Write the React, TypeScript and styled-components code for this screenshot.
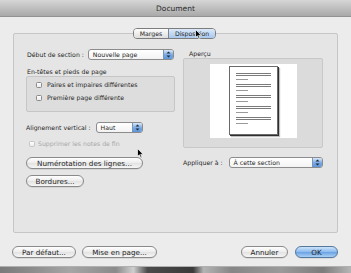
import React from 'react';
import styled, { createGlobalStyle } from 'styled-components';

const GlobalStyle = createGlobalStyle`
  html, body {
    margin: 0;
    padding: 0;
  }
  body {
    width: 351px;
    height: 273px;
    overflow: hidden;
    background: #cfcfcf;
    font-family: "DejaVu Sans", "Liberation Sans", sans-serif;
    color: #262626;
  }
`;

const Window = styled.div`
  position: relative;
  width: 351px;
  height: 266px;
  background: #ececec;
  display: flex;
  flex-direction: column;
`;

const TitleBar = styled.div`
  height: 17px;
  box-sizing: border-box;
  background: linear-gradient(#d6d6d6, #a9a9a9);
  border-bottom: 1px solid #929292;
  display: flex;
  align-items: center;
  justify-content: center;
  font-size: 7.5px;
  color: #2c2c2c;
`;

const Main = styled.div`
  padding: 11px 13px 0 13px;
  display: flex;
  flex-direction: column;
`;

const TabRow = styled.div`
  display: flex;
  justify-content: center;
  margin-bottom: -6px;
  position: relative;
  z-index: 1;
`;

const Segmented = styled.div`
  display: flex;
  height: 11px;
  box-sizing: border-box;
  border: 1px solid #7d7d7d;
  border-radius: 4px;
  overflow: hidden;
  margin-left: -2px;
`;

const Tab = styled.div<{ $active?: boolean; $w: number }>`
  width: ${p => p.$w}px;
  display: flex;
  align-items: center;
  justify-content: center;
  font-size: 6.2px;
  background: ${p => (p.$active ? 'linear-gradient(#dbe9f9, #a8c8ee)' : 'linear-gradient(#fdfdfd, #dedede)')};
  & + & {
    border-left: 1px solid #858585;
  }
`;

const Panel = styled.div`
  width: 325px;
  height: 200px;
  box-sizing: border-box;
  border: 1px solid #c6c6c6;
  border-radius: 2px;
  background: #e5e5e5;
  padding: 5px 14px 0 12px;
  display: grid;
  grid-template-columns: 149px 140px;
  column-gap: 8px;
  align-items: start;
`;

const Column = styled.div`
  display: flex;
  flex-direction: column;
`;

const Row = styled.div<{ $top: number; $gap?: number }>`
  display: flex;
  align-items: center;
  gap: ${p => p.$gap ?? 4}px;
  margin-top: ${p => p.$top}px;
`;

const Label = styled.span<{ $dim?: boolean }>`
  font-size: 6.2px;
  line-height: 8px;
  white-space: nowrap;
  color: ${p => (p.$dim ? '#a8a8a8' : '#262626')};
`;

const PopupBox = styled.div<{ $w: number }>`
  width: ${p => p.$w}px;
  height: 11px;
  box-sizing: border-box;
  border: 1px solid #8c8c8c;
  border-radius: 3px;
  background: linear-gradient(#ffffff, #f3f3f3);
  display: flex;
  align-items: stretch;
  overflow: hidden;
`;

const PopupText = styled.span`
  flex: 1;
  padding-left: 4px;
  font-size: 6.2px;
  line-height: 9px;
  white-space: nowrap;
`;

const PopupArrows = styled.span`
  width: 9px;
  background: linear-gradient(#d8e8fa, #77a8e2 55%, #5f96da);
  border-left: 1px solid #7894bb;
  display: flex;
  align-items: center;
  justify-content: center;
`;

const Popup = ({ w, children }: { w: number; children: React.ReactNode }) => (
  <PopupBox $w={w}>
    <PopupText>{children}</PopupText>
    <PopupArrows>
      <svg width="5" height="7" viewBox="0 0 5 7">
        <path d="M2.5 0.5 L4.5 2.6 L0.5 2.6 Z M2.5 6.5 L4.5 4.4 L0.5 4.4 Z" fill="#1f2a3a" />
      </svg>
    </PopupArrows>
  </PopupBox>
);

const GroupLabel = styled.div`
  margin-top: 8px;
  padding-left: 1px;
  height: 8px;
  font-size: 6.2px;
  line-height: 8px;
`;

const GroupBox = styled.div`
  height: 36px;
  box-sizing: border-box;
  border: 1px solid #c6c6c6;
  border-radius: 2px;
  background: #dddddd;
  padding: 4px 0 0 9px;
  display: flex;
  flex-direction: column;
  gap: 5px;
`;

const CheckRow = styled.label<{ $indent?: number }>`
  display: flex;
  align-items: center;
  gap: 5px;
  height: 8px;
  padding-left: ${p => p.$indent ?? 0}px;
`;

const Box = styled.span<{ $dim?: boolean }>`
  width: 6px;
  height: 6px;
  box-sizing: border-box;
  border: 1px solid ${p => (p.$dim ? '#c4c4c4' : '#8a8a8a')};
  border-radius: 1.5px;
  background: linear-gradient(#ffffff, #ececec);
`;

const PushButton = styled.div<{ $w: number; $default?: boolean }>`
  width: ${p => p.$w}px;
  height: 12px;
  box-sizing: border-box;
  border: 1px solid ${p => (p.$default ? '#55789f' : '#8a8a8a')};
  border-radius: 6px;
  background: ${p =>
    p.$default
      ? 'linear-gradient(#cde3f9, #8dbbee 48%, #6aa2e4 52%, #a9d0f5)'
      : 'linear-gradient(#ffffff, #ececec 50%, #e2e2e2 52%, #f6f6f6)'};
  display: flex;
  align-items: center;
  justify-content: center;
  font-size: 7.2px;
  white-space: nowrap;
  box-shadow: 0 0.5px 0.5px rgba(0, 0, 0, 0.15);
`;

const Heading = styled.div`
  margin-top: 11px;
  padding-left: 6px;
  height: 8px;
  font-size: 6.2px;
  line-height: 8px;
`;

const PreviewBox = styled.div`
  height: 90px;
  box-sizing: border-box;
  border: 1px solid #c8c8c8;
  border-radius: 2px;
  background: #dbdbdb;
  padding-top: 5px;
  display: flex;
  justify-content: center;
  align-items: flex-start;
`;

const Sheet = styled.div`
  width: 87px;
  height: 74px;
  box-sizing: border-box;
  background: #ffffff;
  padding-top: 2px;
  display: flex;
  justify-content: center;
  align-items: flex-start;
`;

const Page = styled.div`
  width: 49px;
  height: 69px;
  box-sizing: border-box;
  background: #ffffff;
  border: 1px solid #6a6a6a;
  box-shadow: 1px 1px 0 #2e2e2e, 2px 2px 1px rgba(0, 0, 0, 0.25);
  padding: 6px 6px 0 6px;
  display: flex;
  flex-direction: column;
  gap: 4px;
`;

const Para = styled.div`
  display: flex;
  flex-direction: column;
  gap: 1px;
`;

const Line = styled.div<{ $short?: boolean }>`
  height: 1px;
  width: ${p => (p.$short ? 12 : 35)}px;
  background: ${p => (p.$short ? '#9a9a9a' : '#7a7a7a')};
  &:last-child {
    margin-top: 2px;
  }
`;

const Footer = styled.div`
  display: flex;
  align-items: center;
  gap: 6px;
  padding: 13px 13px 0 12px;
`;

const Spacer = styled.div`
  flex: 1;
`;

const Strip = styled.div`
  height: 7px;
  border-top: 1px solid #b0b0b0;
  background: linear-gradient(
    to right,
    #7a7a7a 0,
    #8e8e8e 10%,
    #a6a6a6 20%,
    #8a8a8a 33%,
    #cfcfcf 38%,
    #4a4a4a 42%,
    #3a3a3a 55%,
    #b4b4b4 58%,
    #868686 66%,
    #9a9a9a 80%,
    #7c7c7c 92%,
    #b6b6b6 100%
  );
`;

const Cursor = styled.svg<{ $x: number; $y: number }>`
  position: absolute;
  left: ${p => p.$x}px;
  top: ${p => p.$y}px;
  z-index: 5;
`;

const Arrow = ({ x, y }: { x: number; y: number }) => (
  <Cursor $x={x} $y={y} width="8" height="11" viewBox="0 0 8 11">
    <path
      d="M0.5 0.5 L0.5 8.5 L2.4 6.8 L3.8 10 L5 9.5 L3.7 6.4 L6.2 6.4 Z"
      fill="#000"
      stroke="#fff"
      strokeWidth="0.7"
    />
  </Cursor>
);

export default function App() {
  return (
    <>
      <GlobalStyle />
      <Window>
        <TitleBar>Document</TitleBar>
        <Main>
          <TabRow>
            <Segmented>
              <Tab $w={34}>Marges</Tab>
              <Tab $w={46} $active>
                Disposition
              </Tab>
            </Segmented>
          </TabRow>
          <Panel>
            <Column>
              <Row $top={10}>
                <Label style={{ paddingLeft: 1 }}>Début de section :</Label>
                <Popup w={86}>Nouvelle page</Popup>
              </Row>
              <GroupLabel>En-têtes et pieds de page</GroupLabel>
              <GroupBox>
                <CheckRow>
                  <Box />
                  <Label>Paires et impaires différentes</Label>
                </CheckRow>
                <CheckRow>
                  <Box />
                  <Label>Première page différente</Label>
                </CheckRow>
              </GroupBox>
              <Row $top={10} $gap={5}>
                <Label>Alignement vertical :</Label>
                <Popup w={47}>Haut</Popup>
              </Row>
              <CheckRow $indent={3} style={{ marginTop: 7, gap: 3 }}>
                <Box $dim />
                <Label $dim>Supprimer les notes de fin</Label>
              </CheckRow>
              <Row $top={9}>
                <PushButton $w={117}>Numérotation des lignes...</PushButton>
              </Row>
              <Row $top={6}>
                <PushButton $w={58}>Bordures...</PushButton>
              </Row>
            </Column>
            <Column>
              <Heading>Aperçu</Heading>
              <PreviewBox>
                <Sheet>
                  <Page>
                    {[0, 1, 2, 3, 4].map(i => (
                      <Para key={i}>
                        <Line />
                        <Line />
                        <Line $short />
                      </Para>
                    ))}
                  </Page>
                </Sheet>
              </PreviewBox>
              <Row $top={9} $gap={6}>
                <Label>Appliquer à :</Label>
                <Popup w={95}>À cette section</Popup>
              </Row>
            </Column>
          </Panel>
        </Main>
        <Footer>
          <PushButton $w={64}>Par défaut...</PushButton>
          <PushButton $w={75}>Mise en page...</PushButton>
          <Spacer />
          <PushButton $w={47}>Annuler</PushButton>
          <PushButton $w={43} $default style={{ marginLeft: 1 }}>
            OK
          </PushButton>
        </Footer>
        <Arrow x={195} y={29} />
        <Arrow x={137} y={148} />
      </Window>
      <Strip />
    </>
  );
}
